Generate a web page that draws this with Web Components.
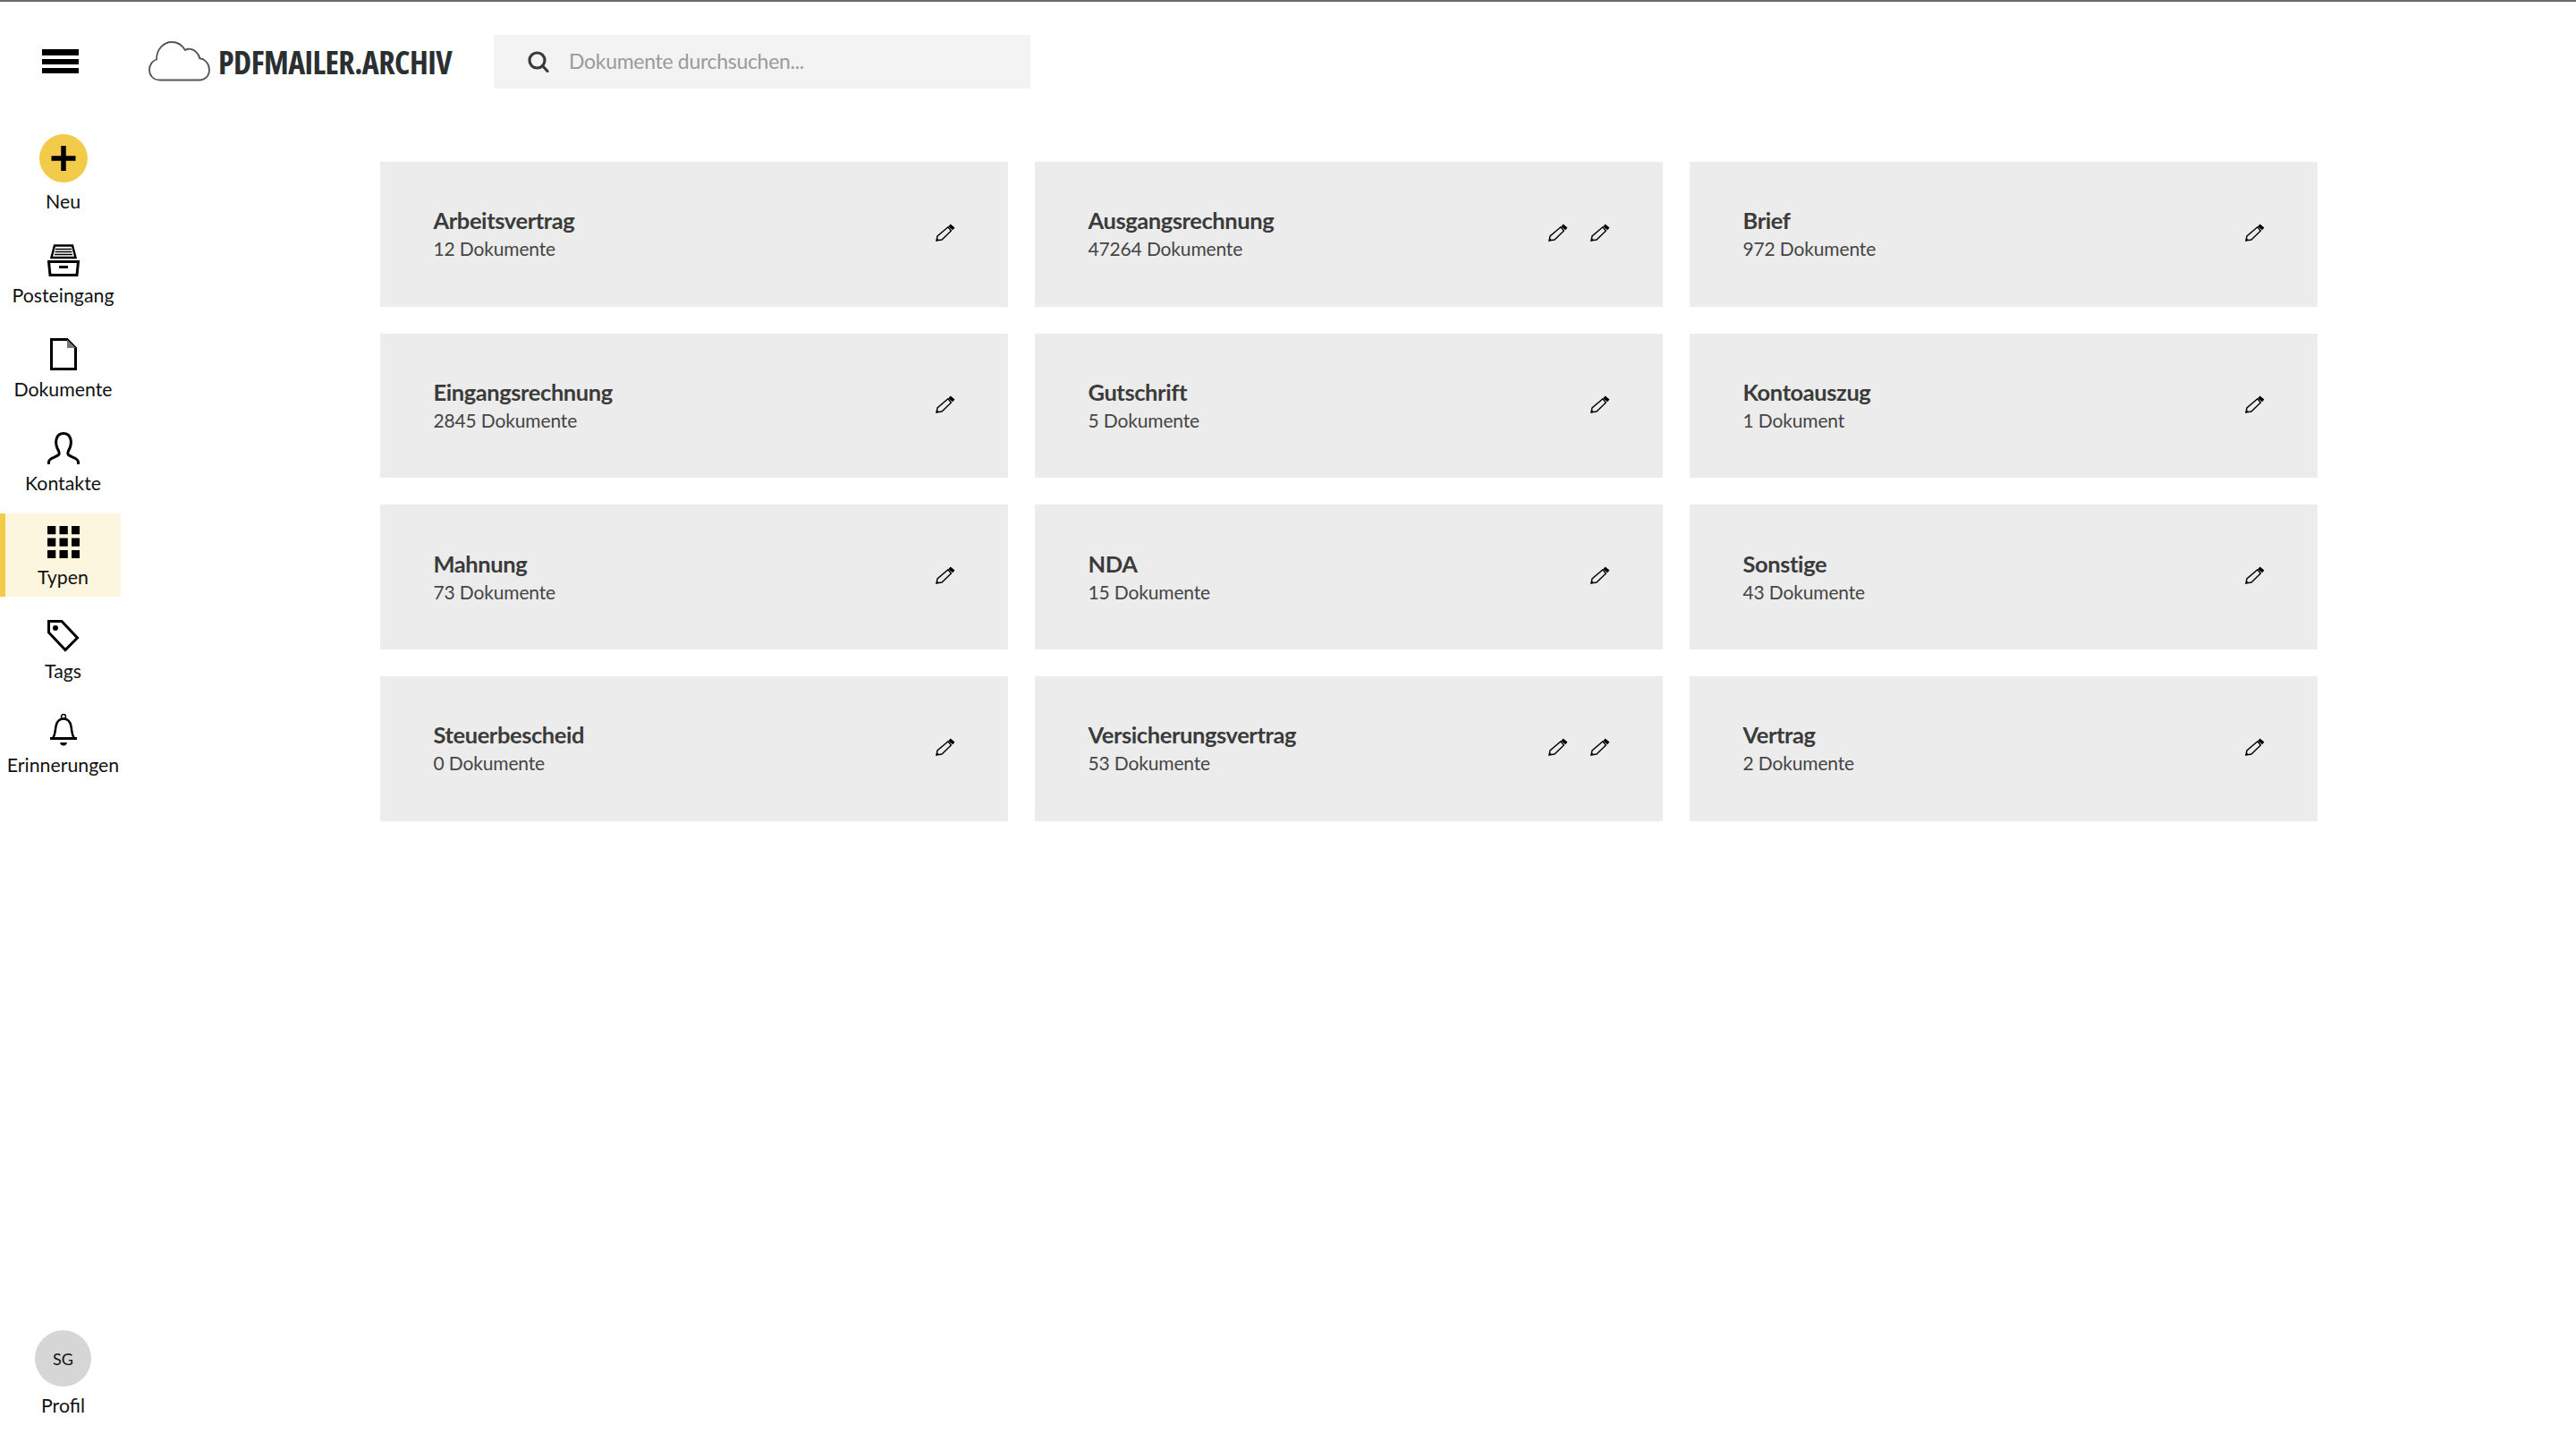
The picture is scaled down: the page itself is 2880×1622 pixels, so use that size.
<!DOCTYPE html>
<html lang="de"><head><meta charset="utf-8"><title>PDFMailer Archiv</title>
<style>
html,body{margin:0;height:100%;overflow:hidden;background:#fff;font-family:Lato,"Open Sans",sans-serif}
body{display:block}
</style></head><body>
<app-shell>
  <app-header slot="header"></app-header>
  <side-nav slot="nav">
    <nav-item label="Neu"><svg slot="icon" width="54" height="54" viewBox="0 0 54 54"><circle cx="27" cy="27" r="27" fill="#f2cb4b"/><path d="M27 13v28M13.500 27h27" stroke="#000" stroke-width="5.500" fill="none"/></svg></nav-item>
    <nav-item label="Posteingang"><svg slot="icon" width="36" height="36" viewBox="0 0 36 36" fill="none" stroke="#000"><path d="M8 1.500H28L31.500 15H4.500Z" stroke-width="2.500"/><path d="M9 5.500H27M8.500 8.500H27.500M8 11.500H28" stroke-width="1.500"/><path d="M1.500 19.500H34.500L33 34.500H3Z" stroke-width="3"/><path d="M13 25.500H23" stroke-width="3"/></svg></nav-item>
    <nav-item label="Dokumente"><svg slot="icon" width="36" height="36" viewBox="0 0 36 36" fill="none"><path d="M4.500 1.500H22L31.500 11V34.500H4.500Z" stroke="#000" stroke-width="3"/><path d="M22 1.500V11H31.500Z" fill="#777"/></svg></nav-item>
    <nav-item label="Kontakte"><svg slot="icon" width="36" height="36" viewBox="0 0 36 36" fill="none" stroke="#000" stroke-width="3"><path d="M1.500 36V33.500C1.500 29 9 28.500 12.500 25.500C14.500 23.500 12.500 21 11 18C8.500 12 9 1.500 18 1.500C27 1.500 27.500 12 25 18C23.500 21 21.500 23.500 23.500 25.500C27 28.500 34.500 29 34.500 33.500V36"/></svg></nav-item>
    <nav-item label="Typen" active><svg slot="icon" width="36" height="36" viewBox="0 0 36 36" fill="#000"><path d="M0 0h9.300v9.300H0zM13.500 0h9.300v9.300h-9.300zM27 0h9v9.300h-9zM0 13.500h9.300v9.300H0zM13.500 13.500h9.300v9.300h-9.300zM27 13.500h9v9.300h-9zM0 27h9.300v9H0zM13.500 27h9.300v9h-9.300zM27 27h9v9h-9z"/></svg></nav-item>
    <nav-item label="Tags"><svg slot="icon" width="36" height="36" viewBox="0 0 36 36" fill="none"><path d="M1.500 1.500H16L33.500 20L20 33.500L1.500 14Z" stroke="#000" stroke-width="3"/><circle cx="9" cy="9" r="3" fill="#000"/></svg></nav-item>
    <nav-item label="Erinnerungen"><svg slot="icon" width="36" height="36" viewBox="0 0 36 36" fill="none" stroke="#000"><circle cx="18" cy="3" r="2.500" stroke-width="1.500"/><path d="M6 27C8.500 24 8.500 20 9.500 14C10.500 8.500 14 5.500 18 5.500C22 5.500 25.500 8.500 26.500 14C27.500 20 27.500 24 30 27" stroke-width="2.500"/><path d="M3 27.500H33" stroke-width="3"/><path d="M14 32H22C21.500 34.500 20 35.500 18 35.500C16 35.500 14.500 34.500 14 32Z" fill="#000" stroke="none"/></svg></nav-item>
    <profile-item slot="bottom" initials="SG" label="Profil"></profile-item>
  </side-nav>
  <type-grid slot="main">
    <type-card name="Arbeitsvertrag" count="12 Dokumente"></type-card>
    <type-card name="Ausgangsrechnung" count="47264 Dokumente" edits="2"></type-card>
    <type-card name="Brief" count="972 Dokumente"></type-card>
    <type-card name="Eingangsrechnung" count="2845 Dokumente"></type-card>
    <type-card name="Gutschrift" count="5 Dokumente"></type-card>
    <type-card name="Kontoauszug" count="1 Dokument"></type-card>
    <type-card name="Mahnung" count="73 Dokumente"></type-card>
    <type-card name="NDA" count="15 Dokumente"></type-card>
    <type-card name="Sonstige" count="43 Dokumente"></type-card>
    <type-card name="Steuerbescheid" count="0 Dokumente"></type-card>
    <type-card name="Versicherungsvertrag" count="53 Dokumente" edits="2"></type-card>
    <type-card name="Vertrag" count="2 Dokumente"></type-card>
  </type-grid>
</app-shell>
<script>
function shadow(el, html){ el.attachShadow({mode:'open'}).innerHTML = html; }
customElements.define('app-shell', class extends HTMLElement{
  constructor(){super();shadow(this,`<style>
    :host{display:grid;grid-template-columns:135px 1fr;grid-template-rows:134px 1fr;height:100vh;box-sizing:border-box;border-top:2px solid #6b6b6b}
    .h{grid-column:1/3}
    .n{display:flex;min-height:0}
    .m{padding:45px 0 0 290px;min-width:0}
  </style><div class="h"><slot name="header"></slot></div><div class="n"><slot name="nav"></slot></div><div class="m"><slot name="main"></slot></div>`);}
});
customElements.define('app-header', class extends HTMLElement{
  constructor(){super();shadow(this,`<style>
    :host{display:flex;align-items:center;height:134px;padding-left:47px}
    .burger{width:41px;height:27px;margin-right:78px;flex:none;margin-top:-1px;background:linear-gradient(#000 0 7px,transparent 7px 11px,#000 11px 17px,transparent 17px 21px,#000 21px 27px)}
    .logo{display:flex;align-items:center;gap:8px;width:386px;flex:none;margin-top:-2px}
    .logo svg{flex:none}
    .logo span{font:700 36px/1 "Open Sans","Liberation Sans",sans-serif;font-stretch:75%;letter-spacing:-.57px;color:#2a2f31;white-space:nowrap;margin-top:3px}
    .search{display:flex;align-items:center;box-sizing:border-box;width:600px;height:60px;background:#f3f3f3;padding-left:38px;gap:22px;color:#9a9a9a;font-size:23px;letter-spacing:-.3px}
    .search svg{flex:none}
    .search span{margin-top:-2px}
  </style>
  <div class="burger"></div>
  <div class="logo"><svg width="70" height="45" viewBox="0 0 70 45" fill="#fff" stroke="#555" stroke-width="1.800"><path d="M13 43.500C5 43.500 1 38 1 32C1 26 5 21.500 9 20.500C9 9 17 1 26 1C33 1 38 5 41 10C44 8 50 8 54 13C56 15 57 17 57 19C63 20 68 25 68 32C68 39 63 43.500 57 43.500Z"/></svg><span>PDFMAILER.ARCHIV</span></div>
  <div class="search"><svg width="24" height="24" viewBox="0 0 24 24" fill="none" stroke="#3a3a3a" stroke-width="3.200"><circle cx="10.500" cy="10.500" r="8.500"/><path d="M16.500 16.500L22 22.500" stroke-linecap="round"/></svg><span>Dokumente durchsuchen...</span></div>`);}
});
customElements.define('side-nav', class extends HTMLElement{
  constructor(){super();shadow(this,`<style>
    :host{display:flex;flex-direction:column;width:135px;gap:12px;padding-bottom:38px;box-sizing:border-box;height:100%}
    .b{margin-top:auto}
  </style><slot></slot><div class="b"><slot name="bottom"></slot></div>`);}
});
customElements.define('nav-item', class extends HTMLElement{
  constructor(){super();shadow(this,`<style>
    :host{display:flex;flex-direction:column;align-items:center;gap:8px;padding:14px 0 9px;border-left:6px solid transparent;color:#111;font-size:21.300px;line-height:26px;white-space:nowrap}
    :host([active]){border-left-color:#f2cb4b;background:#fdf6df}
    ::slotted(svg){display:block}
  </style><slot name="icon"></slot><span>${this.getAttribute('label')}</span>`);}
});
customElements.define('profile-item', class extends HTMLElement{
  constructor(){super();shadow(this,`<style>
    :host{display:flex;flex-direction:column;align-items:center;gap:8px;padding-left:6px;color:#111;font-size:21.300px;line-height:26px}
    .a{width:63px;height:63px;border-radius:50%;background:#d6d6d6;display:flex;align-items:center;justify-content:center;font-size:18px}
  </style><div class="a">${this.getAttribute('initials')}</div><span>${this.getAttribute('label')}</span>`);}
});
customElements.define('type-grid', class extends HTMLElement{
  constructor(){super();shadow(this,`<style>
    :host{display:grid;grid-template-columns:repeat(3,702px);grid-auto-rows:161.700px;gap:30px}
  </style><slot></slot>`);}
});
const pencil = `<svg width="22" height="20" viewBox="0 0 22 20" fill="none" stroke="#000"><path d="M1 19L2 14L14 3.800L17.400 8L7 18Z" stroke-width="1.400"/><path d="M0.500 19.700L1.500 16L4 18.500Z" fill="#000" stroke="none"/><path d="M15.500 1.800L20.300 5.800" stroke-width="3.600"/></svg>`;
customElements.define('type-card', class extends HTMLElement{
  constructor(){super();
    const n=+(this.getAttribute('edits')||1);
    shadow(this,`<style>
    :host{display:flex;align-items:center;background:#ececec;padding:0 59px 4px 59.500px;color:#3b3b3b}
    .t{flex:1;min-width:0;margin-top:3px}
    .name{font-size:25.500px;font-weight:700;line-height:32px;letter-spacing:-.42px}
    .count{font-size:21px;line-height:28px;margin-top:2px;color:#454545;letter-spacing:-.15px}
    .e{display:flex;gap:25px}
    svg{display:block}
  </style><div class="t"><div class="name">${this.getAttribute('name')}</div><div class="count">${this.getAttribute('count')}</div></div><div class="e">${pencil.repeat(n)}</div>`);}
});
</script>
</body></html>
